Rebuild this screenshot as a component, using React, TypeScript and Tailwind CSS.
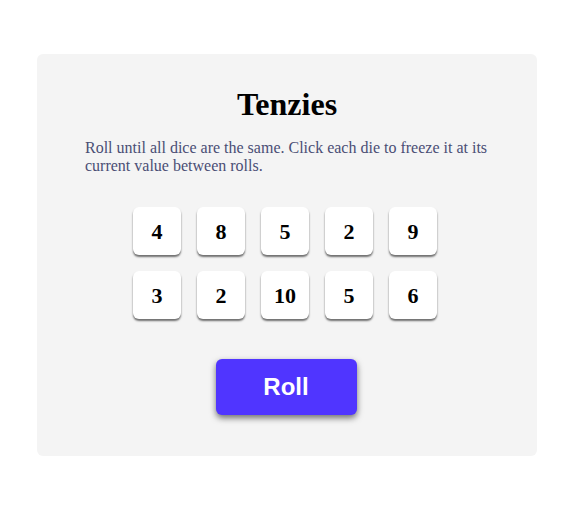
const dice = [4, 8, 5, 2, 9, 3, 2, 10, 5, 6];

export default function App() {
  return (
    <div className="h-[516px] w-[565px] bg-white pt-[54px] pl-[37px]">
      <main className="flex h-[402px] w-[500px] flex-col items-center rounded-[6px] bg-[#f4f4f4] px-12 pt-[32px] font-['Liberation_Serif',serif]">
        <h1 className="text-[32px] leading-[37px] font-bold text-black">Tenzies</h1>
        <p className="mt-4 self-stretch text-base leading-[18px] text-[#4a4e74]">
          Roll until all dice are the same. Click each die to freeze it at its current value between rolls.
        </p>
        <div className="mt-[32px] grid grid-cols-5 gap-4 pr-[4px]">
          {dice.map((d, i) => (
            <button
              key={i}
              className="flex h-12 w-12 items-center justify-center rounded-[6px] bg-white text-[22px] font-bold text-black shadow-[0_2px_2px_rgba(0,0,0,0.55)]"
            >
              {d}
            </button>
          ))}
        </div>
        <button className="mt-10 mr-[2px] h-14 w-[141px] rounded-[6px] bg-[#5035ff] font-['Liberation_Sans',Arial,sans-serif] text-2xl font-bold text-white shadow-[0_3px_6px_rgba(0,0,0,0.55)]">
          Roll
        </button>
      </main>
    </div>
  );
}
